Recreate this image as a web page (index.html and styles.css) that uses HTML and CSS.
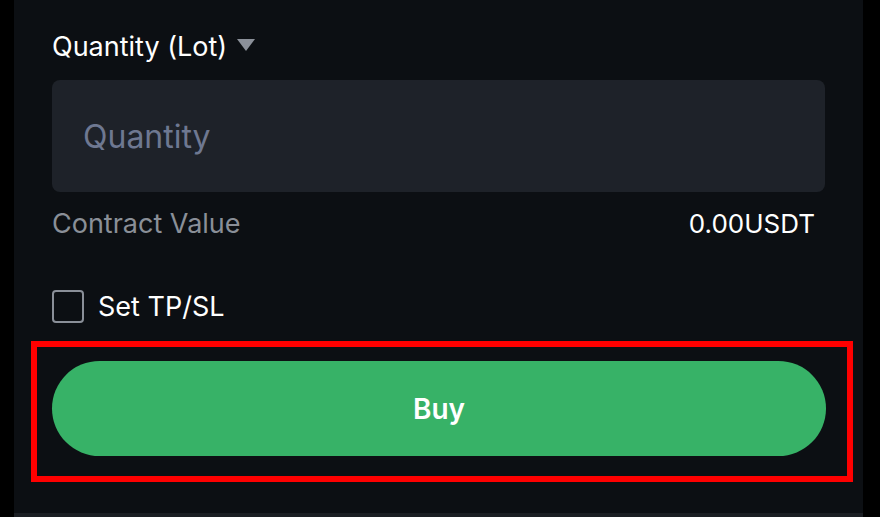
FILE: index.html
```html
<!DOCTYPE html>
<html>
<head>
    <link rel="stylesheet" href="styles.css">
</head>
<body>
    <div class="panel">
        <div class="field-label">
            Quantity (Lot)
            <span class="caret"></span>
        </div>

        <input class="qty-input" type="text" placeholder="Quantity">

        <div class="value-row">
            <span class="value-label">Contract Value</span>
            <span class="value-amount">0.00USDT</span>
        </div>

        <label class="tpsl">
            <span class="checkbox"></span>
            Set TP/SL
        </label>

        <div class="highlight">
            <button class="buy-btn">Buy</button>
        </div>
    </div>
    <div class="panel-footer"></div>
</body>
</html>
```

FILE: styles.css
```css
body {
    margin: 0;
    background: #000;
    font-family: Inter, "Noto Sans", sans-serif;
    height: 517px;
    overflow: hidden;
}
.panel {
    margin: 0 17px 0 14px;
    height: 513px;
    padding: 31px 38px 0;
    box-sizing: border-box;
    background: #0c0f13;
}
.panel-footer {
    margin: 0 17px 0 14px;
    height: 4px;
    background: #1b1e23;
}
.field-label {
    display: flex;
    align-items: center;
    gap: 10px;
    color: #fff;
    font-size: 27px;
    height: 30px;
}
.caret {
    width: 0;
    height: 0;
    border-left: 9px solid transparent;
    border-right: 9px solid transparent;
    border-top: 12px solid #8b9099;
    margin-top: -2px;
}
.qty-input {
    display: block;
    width: 100%;
    height: 112px;
    margin-top: 19px;
    padding: 0 31px;
    box-sizing: border-box;
    border: none;
    border-radius: 8px;
    background: #1e2229;
    color: #fff;
    font-family: inherit;
    font-size: 32px;
    outline: none;
}
.qty-input::placeholder {
    color: #6e7891;
}
.value-row {
    display: flex;
    justify-content: space-between;
    align-items: center;
    height: 30px;
    margin-top: 16px;
    padding-right: 10px;
}
.value-label {
    color: #8a8f98;
    font-size: 27px;
}
.value-amount {
    color: #fff;
    font-size: 26px;
}
.tpsl {
    display: flex;
    align-items: center;
    gap: 14px;
    margin-top: 52px;
    color: #fff;
    font-size: 27px;
    height: 32px;
}
.checkbox {
    width: 28px;
    height: 29px;
    border: 2px solid #8a8f98;
    border-radius: 4px;
}
.highlight {
    margin: 19px -28px 0 -21px;
    padding: 14px 21px 20px 15px;
    border: 6px solid #ff0000;
}
.buy-btn {
    display: block;
    width: 100%;
    height: 95px;
    border: none;
    border-radius: 48px;
    background: #37b267;
    color: #fff;
    font-family: inherit;
    font-size: 28px;
    font-weight: 600;
    cursor: pointer;
}
```
